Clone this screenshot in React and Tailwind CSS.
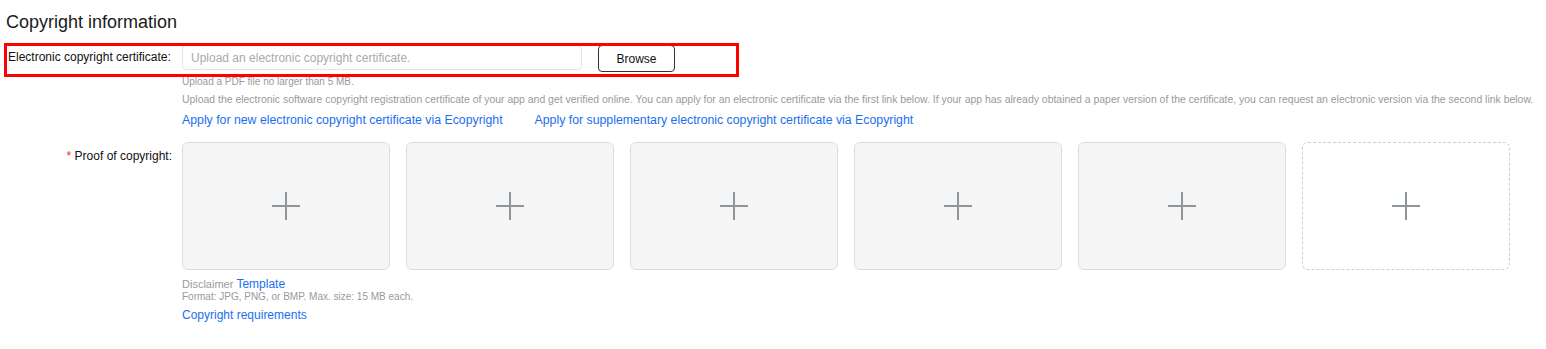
export default function App() {
    const boxes = [0, 1, 2, 3, 4]

    return (
        <div className="min-h-screen bg-white pl-[6px] pt-[12px] text-[#222]" style={{ fontFamily: '"Liberation Sans", Arial, sans-serif' }}>
            {/* Section title */}
            <h2 className="text-[18px] leading-[20px] font-normal text-[#1a1a1a]">Copyright information</h2>

            {/* Electronic certificate row */}
            <div className="relative mt-[13px] flex items-start">
                <div className="w-[176px] shrink-0 pl-[2px] pt-[4px] text-[12px] leading-[16px] text-[#111]">
                    Electronic copyright certificate:
                </div>
                <div className="flex h-[25px] w-[400px] items-center rounded-[4px] border border-[#e3e3e3] px-[8px] text-[12px] text-[#aaa]">
                    Upload an electronic copyright certificate.
                </div>
                <button className="ml-[16px] h-[27px] w-[77px] rounded-[4px] border border-[#333] bg-white text-[12px] text-[#111]">
                    Browse
                </button>
                {/* annotation frame */}
                <div className="pointer-events-none absolute left-[-2px] top-[-2px] h-[34px] w-[735px] border-[3px] border-[#ff0000]" />
            </div>

            <div className="ml-[176px]">
                <p className="mt-[3px] text-[10px] leading-[14px] text-[#9a9a9a]">Upload a PDF file no larger than 5 MB.</p>
                <p className="mt-[3px] whitespace-nowrap text-[10.45px] leading-[16px] text-[#9a9a9a]">
                    Upload the electronic software copyright registration certificate of your app and get verified online. You can apply for an electronic certificate via the first link below. If your app has already obtained a paper version of the certificate, you can request an electronic version via the second link below.
                </p>
                <div className="mt-[2px] flex gap-[32px] text-[12.3px] leading-[20px] text-[#1a6ff0]">
                    <a>Apply for new electronic copyright certificate via Ecopyright</a>
                    <a>Apply for supplementary electronic copyright certificate via Ecopyright</a>
                </div>
            </div>

            {/* Proof of copyright */}
            <div className="mt-[12px] flex items-start">
                <div className="w-[176px] shrink-0 pr-[10px] pt-[6px] text-right text-[12px] leading-[16px] text-[#111]">
                    <span className="text-[#f5222d]">*</span> Proof of copyright:
                </div>
                <div>
                    <div className="flex gap-[16px]">
                        {boxes.map((b) => (
                            <div key={b} className="flex h-[128px] w-[208px] items-center justify-center rounded-[6px] border border-[#dcdcdc] bg-[#f5f5f5]">
                                <Plus />
                            </div>
                        ))}
                        <div className="flex h-[128px] w-[208px] items-center justify-center rounded-[6px] border border-dashed border-[#cfcfcf] bg-white">
                            <Plus />
                        </div>
                    </div>
                    <p className="mt-[8px] text-[11px] leading-[12px] text-[#9a9a9a]">
                        Disclaimer <a className="text-[12px] text-[#1a6ff0]">Template</a>
                    </p>
                    <p className="text-[10px] leading-[13px] text-[#9a9a9a]">Format: JPG, PNG, or BMP. Max. size: 15 MB each.</p>
                    <p className="mt-[4px] text-[12px] leading-[16px] text-[#1a6ff0]">Copyright requirements</p>
                </div>
            </div>
        </div>
    )
}

function Plus() {
    return (
        <svg width="30" height="30" viewBox="0 0 30 30" fill="none">
            <path d="M15 1v28M1 15h28" stroke="#8f959e" strokeWidth="2" />
        </svg>
    )
}
